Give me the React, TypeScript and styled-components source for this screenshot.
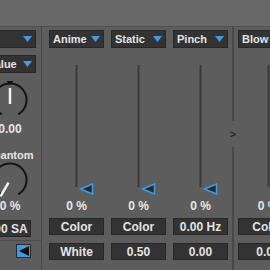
import styled, { createGlobalStyle } from 'styled-components';

const GlobalStyle = createGlobalStyle`
  html, body {
    margin: 0;
    padding: 0;
    background: #5d5d5d;
    overflow: hidden;
  }
  body {
    font-family: "Liberation Sans", Arial, sans-serif;
  }
`;

const Device = styled.div`
  width: 270px;
  height: 270px;
  overflow: hidden;
  display: flex;
  flex-direction: column;
  background: #5d5d5d;
`;

const TitleBar = styled.div`
  flex: 0 0 27px;
  box-sizing: border-box;
  background: #686868;
  border-bottom: 1px solid #4f4f4f;
`;

const Body = styled.div`
  flex: 1;
  min-height: 0;
  display: flex;
  margin-left: -21px;
`;

const LeftCol = styled.div`
  flex: 0 0 63px;
  box-sizing: border-box;
  border-right: 1px solid #474747;
  display: flex;
  flex-direction: column;
  align-items: center;
  padding-top: 3px;
`;

const Menu = styled.div<{ $w?: number }>`
  width: ${(p) => (p.$w ? `${p.$w}px` : '100%')};
  height: 18px;
  box-sizing: border-box;
  flex: 0 0 auto;
  background: #333333;
  border: 1px solid #272727;
  display: flex;
  align-items: center;
  justify-content: space-between;
  padding: 0 3px;
  color: #e3e3e3;
  font-size: 11px;
  font-weight: bold;
  white-space: nowrap;
  overflow: hidden;
`;

const LeftMenu = styled(Menu)<{ $gap: number }>`
  align-self: flex-end;
  margin-right: 5px;
  margin-top: ${(p) => p.$gap}px;
`;

const KnobSvg = styled.svg<{ $gap: number }>`
  flex: 0 0 auto;
  overflow: visible;
  margin-top: ${(p) => p.$gap}px;
`;

const Readout = styled.div<{ $gap?: number; $size?: number }>`
  margin-top: ${(p) => p.$gap ?? 0}px;
  font-size: ${(p) => p.$size ?? 12}px;
  line-height: 13px;
  font-weight: bold;
  color: #e6e6e6;
  white-space: nowrap;
`;

const ValueBox = styled.div<{ $gap: number; $w?: number }>`
  width: ${(p) => (p.$w ? `${p.$w}px` : '100%')};
  height: 17px;
  box-sizing: border-box;
  flex: 0 0 auto;
  margin-top: ${(p) => p.$gap}px;
  background: #333333;
  border: 1px solid #272727;
  display: flex;
  align-items: center;
  justify-content: center;
  color: #e3e3e3;
  font-size: 12px;
  font-weight: bold;
  white-space: nowrap;
  overflow: hidden;
`;

const LeftValueBox = styled(ValueBox)`
  align-self: flex-end;
  margin-right: 10px;
`;

const LeftFooter = styled.div`
  margin-top: auto;
  align-self: stretch;
  height: 30px;
  box-sizing: border-box;
  border-top: 1px solid #4c4c4c;
  display: flex;
  justify-content: flex-end;
  padding: 3px 10px 0 0;
`;

const ToggleButton = styled.div`
  width: 15px;
  height: 14px;
  box-sizing: border-box;
  background: #3b9be8;
  border: 1px solid #2a2a2a;
  display: flex;
  align-items: center;
  justify-content: center;
`;

const Strips = styled.div`
  display: flex;
  gap: 7px;
  padding-left: 7px;
`;

const Strip = styled.div<{ $w: number }>`
  flex: 0 0 ${(p) => p.$w}px;
  display: flex;
  flex-direction: column;
  align-items: center;
  padding-top: 3px;
`;

const SliderWrap = styled.div`
  position: relative;
  width: 100%;
  height: 135px;
  margin-top: 17px;
  display: flex;
  justify-content: center;
`;

const Track = styled.div`
  width: 1px;
  height: 122px;
  background: #3a3a3a;
  border-left: 1px solid #4b4b4b;
  border-right: 1px solid #4b4b4b;
`;

const Thumb = styled.svg`
  position: absolute;
  top: 118px;
  left: calc(50% + 2px);
`;

const Divider = styled.div`
  flex: 0 0 10px;
  display: flex;
  flex-direction: column;
  align-items: center;
`;

const DividerLine = styled.div<{ $grow?: boolean }>`
  width: 2px;
  background: #484848;
  ${(p) => (p.$grow ? 'flex: 1;' : 'height: 94px;')}
`;

const DividerGlyph = styled.div`
  height: 26px;
  display: flex;
  align-items: center;
  font-size: 11px;
  font-weight: bold;
  color: #2b2b2b;
`;

const Arrow = () => (
  <svg width="9" height="6" viewBox="0 0 9 6">
    <polygon points="0,0 9,0 4.5,6" fill="#3d9be9" />
  </svg>
);

// angle in degrees, clockwise from 12 o'clock, around the knob centre (20, 20)
const point = (a: number, r: number) => {
  const rad = (a * Math.PI) / 180;
  return [20 + r * Math.sin(rad), 20 - r * Math.cos(rad)];
};

const Knob = ({ angle, gap, marker }: { angle: number; gap: number; marker?: boolean }) => {
  const [sx, sy] = point(-150, 16.5);
  const [ex, ey] = point(150, 16.5);
  const [p1x, p1y] = point(angle, angle === 0 ? -4 : 3);
  const [p2x, p2y] = point(angle, angle === 0 ? 12 : 19);
  return (
    <KnobSvg $gap={gap} width="40" height="40" viewBox="0 0 40 40">
      <path d={`M ${sx} ${sy} A 16.5 16.5 0 1 1 ${ex} ${ey}`} fill="none" stroke="#141414" strokeWidth="2" />
      {marker && <polygon points="16.5,1 23.5,1 20,5" fill="#111" />}
      <line x1={p1x} y1={p1y} x2={p2x} y2={p2y} stroke="#f0f0f0" strokeWidth="2.5" />
    </KnobSvg>
  );
};

const strips = [
  { name: 'Anime', mode: 'Color', value: 'White', w: 55 },
  { name: 'Static', mode: 'Color', value: '0.50', w: 55 },
  { name: 'Pinch', mode: '0.00 Hz', value: '0.00', w: 55 },
];

const SliderStrip = ({ name, mode, value, w }: { name: string; mode: string; value: string; w: number }) => (
  <Strip $w={w}>
    <Menu>
      <span>{name}</span>
      <Arrow />
    </Menu>
    <SliderWrap>
      <Track />
      <Thumb width="15" height="12" viewBox="0 0 15 12">
        <polygon points="1.5,6 13.5,1 13.5,11" fill="#2b2b2b" stroke="#3d9ce8" strokeWidth="1.5" />
      </Thumb>
    </SliderWrap>
    <Readout>0 %</Readout>
    <ValueBox $gap={5}>{mode}</ValueBox>
    <ValueBox $gap={8}>{value}</ValueBox>
  </Strip>
);

export default function App() {
  return (
    <>
      <GlobalStyle />
      <Device>
        <TitleBar />
        <Body>
          <LeftCol>
            <LeftMenu $w={52} $gap={0}>
              <span>In</span>
              <Arrow />
            </LeftMenu>
            <LeftMenu $w={52} $gap={7}>
              <span>Value</span>
              <Arrow />
            </LeftMenu>
            <Knob angle={0} gap={7} marker />
            <Readout $gap={3}>0.00</Readout>
            <Readout $gap={13} $size={11}>Phantom</Readout>
            <Knob angle={-150} gap={-2} />
            <Readout $gap={0}>0 %</Readout>
            <LeftValueBox $gap={7} $w={50}>0.00 SA</LeftValueBox>
            <LeftFooter>
              <ToggleButton>
                <svg width="10" height="10" viewBox="0 0 10 10">
                  <polygon points="0,5 10,0 10,10" fill="#111" />
                </svg>
              </ToggleButton>
            </LeftFooter>
          </LeftCol>
          <Strips>
            {strips.map((s) => (
              <SliderStrip key={s.name} {...s} />
            ))}
          </Strips>
          <Divider>
            <DividerLine />
            <DividerGlyph>&gt;</DividerGlyph>
            <DividerLine $grow />
          </Divider>
          <SliderStrip name="Blow" mode="Color" value="0.00" w={60} />
        </Body>
      </Device>
    </>
  );
}
